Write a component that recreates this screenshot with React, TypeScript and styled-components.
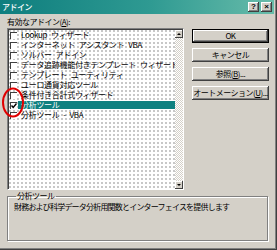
import React from "react";
import styled, { createGlobalStyle, css } from "styled-components";

const Global = createGlobalStyle`
  html, body { margin: 0; padding: 0; background: #d4d0c8; }
  body {
    width: 277px; height: 250px; overflow: hidden;
    font-family: "Noto Sans CJK JP", "Noto Sans", sans-serif;
  }
`;

const FONT = `"Noto Sans CJK JP", "Noto Sans", sans-serif`;

const Window = styled.div`
  position: relative;
  width: 277px;
  height: 250px;
  box-sizing: border-box;
  background: #d4d0c8;
  border-right: 1px solid #404040;
  border-bottom: 1px solid #404040;
  box-shadow: inset -1px -1px 0 #808080;
  padding-right: 2px;
  display: flex;
  flex-direction: column;
  font-family: ${FONT};
  font-size: 8px;
  letter-spacing: -0.5px;
  color: #000;
`;

const TitleBar = styled.div`
  height: 14px;
  display: flex;
  align-items: center;
  padding: 0 2px 0 2px;
  background: linear-gradient(to right, #0e7e7e 0%, #2f9a92 55%, #68bcaa 100%);
`;

const Title = styled.span`
  flex: 1;
  color: #fff;
  font-size: 8px;
  line-height: 14px;
  font-weight: 500;
`;

const TitleButton = styled.div<{ $gap?: number }>`
  width: 11px;
  height: 10px;
  box-sizing: border-box;
  margin-left: ${(p) => p.$gap ?? 1}px;
  background: #d4d0c8;
  box-shadow: inset -1px -1px #404040, inset 1px 1px #fff, inset -2px -2px #808080;
  display: flex;
  align-items: center;
  justify-content: center;
  font-family: "Liberation Sans", sans-serif;
  font-weight: bold;
  font-size: 8px;
  letter-spacing: 0;
  line-height: 10px;
`;

const Main = styled.div`
  display: grid;
  grid-template-columns: 177px 77px;
  column-gap: 8px;
  padding: 2px 0 0 7px;
`;

const LeftColumn = styled.div`
  display: flex;
  flex-direction: column;
`;

const FieldLabel = styled.div`
  height: 12px;
  line-height: 12px;
`;

const Mnemonic = styled.span`
  text-decoration: underline;
`;

const ListBox = styled.div`
  width: 177px;
  height: 162px;
  box-sizing: border-box;
  border: 1px solid;
  border-color: #808080 #fff #fff #808080;
  box-shadow: inset 1px 1px #404040;
  padding: 1px 0 0 1px;
  display: flex;
  background: #fff;
`;

const Items = styled.div`
  flex: 1;
  min-width: 0;
  display: flex;
  flex-direction: column;
  background-color: #fff;
  background-image: radial-gradient(circle at 1px 1px, #c6c6c6 0.7px, transparent 0.9px);
  background-size: 4px 4px;
`;

const Row = styled.div`
  height: 10px;
  display: flex;
  align-items: center;
  padding-left: 1px;
`;

const Check = styled.div`
  width: 7px;
  height: 7px;
  flex: none;
  box-sizing: border-box;
  border-top: 1px solid #404040;
  border-left: 1px solid #404040;
  background: #fff;
  margin-right: 1px;
  display: flex;
  align-items: center;
  justify-content: center;
`;

const ItemLabel = styled.div<{ $selected?: boolean }>`
  flex: 1;
  height: 8px;
  line-height: 8px;
  padding-left: 3px;
  white-space: pre;
  letter-spacing: -0.3px;
  ${(p) =>
    p.$selected &&
    css`
      background: #0e8080;
      color: #fff;
    `}
`;

const ScrollBar = styled.div`
  width: 8px;
  flex: none;
  display: flex;
  flex-direction: column;
  justify-content: space-between;
  background-color: #fff;
  background-image: conic-gradient(#d4d0c8 25%, #fff 0 50%, #d4d0c8 0 75%, #fff 0);
  background-size: 2px 2px;
`;

const ScrollArrow = styled.div`
  height: 8px;
  background: #d4d0c8;
  box-shadow: inset -1px -1px #404040, inset 1px 1px #fff;
  display: flex;
  align-items: center;
  justify-content: center;
`;

const Buttons = styled.div`
  display: flex;
  flex-direction: column;
  gap: 5px;
  padding-top: 13px;
`;

const Button = styled.div<{ $default?: boolean }>`
  width: 77px;
  height: 14px;
  box-sizing: border-box;
  background: #d4d0c8;
  display: flex;
  align-items: center;
  justify-content: center;
  line-height: 14px;
  white-space: nowrap;
  box-shadow: inset -1px -1px #404040, inset 1px 1px #fff, inset -2px -2px #808080;
  ${(p) =>
    p.$default &&
    css`
      box-shadow: inset 0 0 0 1px #000, inset -2px -2px #404040, inset 2px 2px #fff,
        inset -3px -3px #808080;
    `}
`;

const Group = styled.fieldset`
  margin: 1px 0 0 7px;
  width: 261px;
  height: 50px;
  box-sizing: border-box;
  padding: 0 0 0 6px;
  border: 1px solid #808080;
  box-shadow: inset 1px 1px #fff, 1px 1px #fff;
`;

const Legend = styled.legend`
  padding: 0 1px;
  margin-left: 2px;
  line-height: 10px;
`;

const Description = styled.div`
  line-height: 10px;
  margin-top: 1px;
  white-space: nowrap;
  letter-spacing: -0.8px;
`;

const Annotation = styled.svg`
  position: absolute;
  left: 2px;
  top: 87px;
  pointer-events: none;
`;

const items = [
  "Lookup\u2002ウィザード",
  "インターネット\u2002アシスタント\u2002VBA",
  "ソルバー\u2002アドイン",
  "データ追跡機能付きテンプレート\u2002ウィザード",
  "テンプレート\u2002ユーティリティ",
  "ユーロ通貨対応ツール",
  "条件付き合計式ウィザード",
  "分析ツール",
  "分析ツール\u2002-\u2002VBA",
];

export default function App() {
  return (
    <>
      <Global />
      <Window>
        <TitleBar>
          <Title>アドイン</Title>
          <TitleButton>?</TitleButton>
          <TitleButton $gap={2}>×</TitleButton>
        </TitleBar>
        <Main>
          <LeftColumn>
            <FieldLabel>
              有効なアドイン(<Mnemonic>A</Mnemonic>):
            </FieldLabel>
            <ListBox>
              <Items>
                {items.map((t, i) => (
                  <Row key={t}>
                    <Check>
                      {i === 7 && (
                        <svg width="6" height="6" viewBox="0 0 6 6">
                          <polyline points="0.5,2.5 2.2,4.5 5.5,0.5" fill="none" stroke="#000" strokeWidth="1.4" />
                        </svg>
                      )}
                    </Check>
                    <ItemLabel $selected={i === 7}>{t}</ItemLabel>
                  </Row>
                ))}
              </Items>
              <ScrollBar>
                <ScrollArrow>
                  <svg width="4" height="2" viewBox="0 0 4 2">
                    <polygon points="2,0 4,2 0,2" fill="#000" />
                  </svg>
                </ScrollArrow>
                <ScrollArrow>
                  <svg width="4" height="2" viewBox="0 0 4 2">
                    <polygon points="0,0 4,0 2,2" fill="#000" />
                  </svg>
                </ScrollArrow>
              </ScrollBar>
            </ListBox>
          </LeftColumn>
          <Buttons>
            <Button $default>OK</Button>
            <Button>キャンセル</Button>
            <Button>
              参照(<Mnemonic>B</Mnemonic>)...
            </Button>
            <Button>
              オートメーション(<Mnemonic>U</Mnemonic>)...
            </Button>
          </Buttons>
        </Main>
        <Group>
          <Legend>分析ツール</Legend>
          <Description>財務および科学データ分析用関数とインターフェイスを提供します</Description>
        </Group>
        <Annotation width="24" height="31" viewBox="0 0 24 31">
          <ellipse cx="11" cy="15.5" rx="10" ry="14" fill="none" stroke="#e00000" strokeWidth="2" />
        </Annotation>
      </Window>
    </>
  );
}
